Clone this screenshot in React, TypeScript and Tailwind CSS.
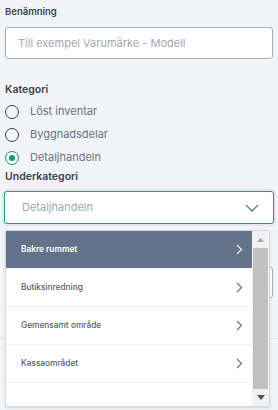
import * as React from "react"

const SUBCATEGORIES = ["Bakre rummet", "Butiksinredning", "Gemensamt område", "Kassaområdet"]

function Radio({ label, checked = false }: { label: string; checked?: boolean }) {
    return (
        <div className="flex items-center h-[23px]">
            <span
                className={
                    checked
                        ? "flex items-center justify-center w-[14px] h-[14px] rounded-full border-[1.5px] border-[#16996a]"
                        : "w-[14px] h-[14px] rounded-full border-[1.5px] border-[#3a4150]"
                }
            >
                {checked && <span className="w-[6px] h-[6px] rounded-full bg-[#16996a]" />}
            </span>
            <span className="ml-[11px] text-[11px] text-[#6b7280]">{label}</span>
        </div>
    )
}

function ChevronRight({ light = false }: { light?: boolean }) {
    return (
        <svg width="7" height="11" viewBox="0 0 7 11" fill="none">
            <path d="M1 1l4.5 4.5L1 10" stroke={light ? "#e8ecf2" : "#6b7585"} strokeWidth="1.2" />
        </svg>
    )
}

export default function App() {
    return (
        <div
            className="relative w-[278px] h-[410px] overflow-hidden bg-[#f2f4f8]"
            style={{ fontFamily: "Inter, 'Noto Sans', sans-serif" }}
        >
            <div className="flex flex-col px-[5px] pt-[4px]">
                {/* Benämning */}
                <p className="h-4 leading-4 text-[9.5px] font-semibold text-[#3b4250]">Benämning</p>
                <div className="mt-[7px] h-[32px] flex items-center rounded-[3px] border border-[#a3abb8] bg-white pl-[12px]">
                    <span className="text-[11px] text-[#a1a7b3]">Till exempel Varumärke - Modell</span>
                </div>

                {/* Kategori */}
                <p className="mt-[23px] h-4 leading-4 text-[10.5px] font-semibold text-[#3b4250]">Kategori</p>
                <div className="mt-[2px] flex flex-col">
                    <Radio label="Löst inventar" />
                    <Radio label="Byggnadsdelar" />
                    <Radio label="Detaljhandeln" checked />
                </div>

                {/* Underkategori */}
                <p className="h-4 leading-4 text-[10.5px] font-semibold text-[#3b4250]">Underkategori</p>
                <div className="mt-[6px] -mx-[1px] h-[33px] flex items-center justify-between rounded-[3px] border-[1.5px] border-[#1b9a6b] bg-white pl-[17px] pr-[14px] ring-[2px] ring-[#e3e8ef]">
                    <span className="text-[11px] text-[#a1a7b3]">Detaljhandeln</span>
                    <svg width="14" height="8" viewBox="0 0 14 8" fill="none">
                        <path d="M1 1l6 6 6-6" stroke="#6b7585" strokeWidth="1.3" />
                    </svg>
                </div>

                {/* content behind the open list */}
                <div className="mt-[42px] h-[33px] rounded-[4px] border border-[#a3abb8] bg-white" />
            </div>
            <div className="mt-[39px] h-px bg-[#e1e5ec]" />
            <p className="mt-[43px] px-[5px] h-4 leading-4 text-[10.5px] font-semibold text-[#3b4250]">Beskrivning av objektet</p>

            {/* Open dropdown list */}
            <div className="absolute left-[5px] top-[230px] w-[265px] h-[177px] flex rounded-[2px] border border-[#d5dae2] bg-white shadow-[0_1px_3px_rgba(0,0,0,0.12)]">
                <div className="flex-1 flex flex-col overflow-hidden">
                    {SUBCATEGORIES.map((item, i) => (
                        <div
                            key={item}
                            className={
                                i === 0
                                    ? "h-[37px] shrink-0 flex items-center justify-between bg-[#64738a] pl-[15px] pr-[9px]"
                                    : "h-[38px] shrink-0 flex items-center justify-between border-t border-[#edf0f4] pl-[15px] pr-[9px]"
                            }
                        >
                            <span className={i === 0 ? "text-[8.3px] font-semibold text-white" : "text-[8.3px] font-medium text-[#555d6b]"}>
                                {item}
                            </span>
                            <ChevronRight light={i === 0} />
                        </div>
                    ))}
                    <div className="h-[38px] shrink-0 border-t border-[#edf0f4]" />
                </div>

                {/* scrollbar */}
                <div className="w-[17px] flex flex-col items-center bg-[#f1f1f1]">
                    <div className="h-[17px] w-full flex items-center justify-center">
                        <svg width="7" height="4" viewBox="0 0 7 4">
                            <path d="M0 4L3.5 0L7 4z" fill="#a3a3a3" />
                        </svg>
                    </div>
                    <div className="flex-1 w-[15px] bg-[#c1c1c1]" />
                    <div className="h-[17px] w-full flex items-center justify-center">
                        <svg width="8" height="5" viewBox="0 0 8 5">
                            <path d="M0 0L8 0L4 5z" fill="#505050" />
                        </svg>
                    </div>
                </div>
            </div>
        </div>
    )
}
